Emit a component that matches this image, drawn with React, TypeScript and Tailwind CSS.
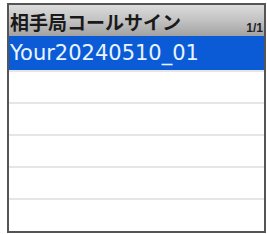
export default function App() {
  const rows = ["", "", "", "", ""];
  return (
    <div className="h-[234px] w-[267px] bg-white pl-[7px] pt-[3px] font-['Noto_Sans_CJK_JP','Liberation_Sans',sans-serif]">
      <div className="flex h-[230px] w-[259px] flex-col border-2 border-[#555555] bg-white">
        <div className="flex h-[31px] shrink-0 items-end justify-between bg-gradient-to-b from-[#dcdcdc] via-[#c2c2c2] to-[#a2a2a2] pl-[1px] pr-[1px]">
          <span className="mb-[1px] text-[19px] font-bold leading-[27px] text-[#1a1a1a]">
            相手局コールサイン
          </span>
          <span className="mb-[1px] font-['Liberation_Sans',sans-serif] text-[12px] font-bold leading-[13px] text-[#222222]">1/1</span>
        </div>
        <div className="flex h-[34px] shrink-0 items-center bg-[#0b5bd6] pl-[1px] font-['DejaVu_Sans',sans-serif] text-[21px] leading-none text-[#e8f4ff]">
          Your20240510_01
        </div>
        {rows.map((_, i) => (
          <div key={i} className="h-[32px] shrink-0 border-t-2 border-[#e6e6e6] first:border-t-0" />
        ))}
      </div>
    </div>
  );
}
